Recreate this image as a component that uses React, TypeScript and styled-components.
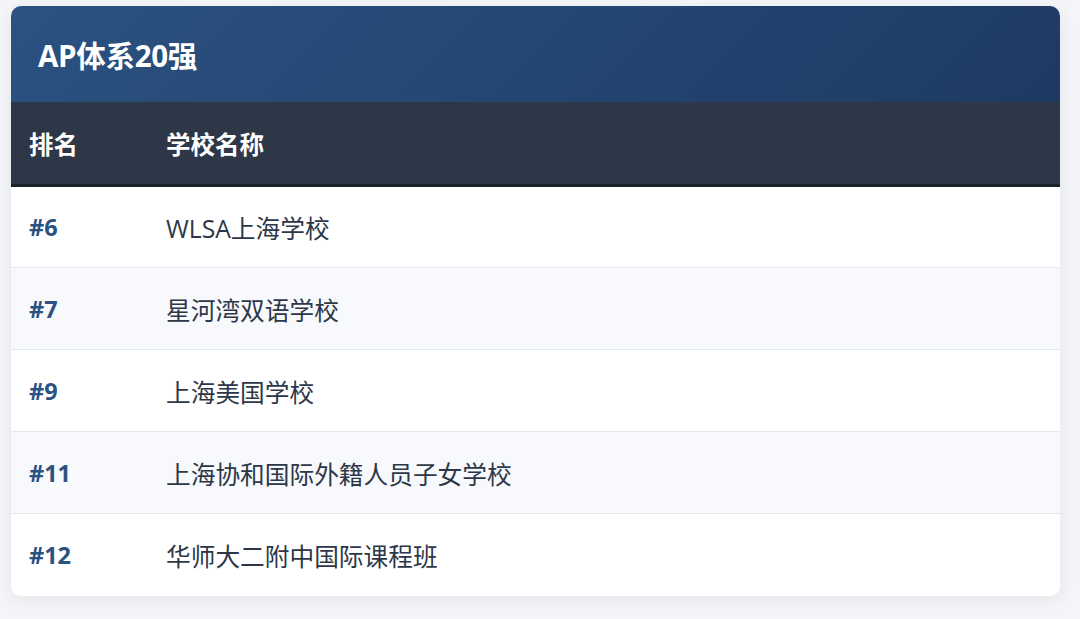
import React from "react";
import styled, { createGlobalStyle } from "styled-components";

const GlobalStyle = createGlobalStyle`
  html, body {
    margin: 0;
    padding: 0;
    background: #f4f5f8;
    font-family: "Open Sans", "Noto Sans CJK SC", sans-serif;
  }
`;

const schools = [
  { rank: 6, name: "WLSA上海学校" },
  { rank: 7, name: "星河湾双语学校" },
  { rank: 9, name: "上海美国学校" },
  { rank: 11, name: "上海协和国际外籍人员子女学校" },
  { rank: 12, name: "华师大二附中国际课程班" },
];

const App = () => {
  return (
    <>
      <GlobalStyle />
      <Page>
        <Card>
          <Header>
            <Title>AP体系20强</Title>
          </Header>
          <Table>
            <thead>
              <tr>
                <HeadCell>排名</HeadCell>
                <HeadCell>学校名称</HeadCell>
              </tr>
            </thead>
            <tbody>
              {schools.map((s, i) => (
                <Row key={s.rank} $alt={i % 2 === 1}>
                  <RankCell>#{s.rank}</RankCell>
                  <NameCell>{s.name}</NameCell>
                </Row>
              ))}
            </tbody>
          </Table>
        </Card>
      </Page>
    </>
  );
};

export default App;

const Page = styled.div`
  padding: 6px 20px 23px 11px;
`;

const Card = styled.div`
  width: 1049px;
  background: #ffffff;
  border-radius: 10px;
  overflow: hidden;
  box-shadow: 0 4px 16px rgba(30, 45, 80, 0.08);
`;

const Header = styled.div`
  height: 96px;
  display: flex;
  align-items: center;
  padding: 0 27px;
  background: linear-gradient(135deg, #2b5281 0%, #1d3a63 100%);
`;

const Title = styled.h1`
  margin: 0;
  font-size: 29.5px;
  font-weight: 700;
  color: #ffffff;
  letter-spacing: -0.3px;
`;

const Table = styled.table`
  width: 100%;
  border-collapse: collapse;
`;

const HeadCell = styled.th`
  height: 82px;
  padding: 0 18px;
  text-align: left;
  font-size: 24.5px;
  font-weight: 700;
  color: #ffffff;
  background: #2d3748;
  border-bottom: 3px solid #1a202c;
  &:first-child {
    width: 101px;
  }
`;

const Row = styled.tr<{ $alt: boolean }>`
  height: 82px;
  background: ${(p) => (p.$alt ? "#f7f9fc" : "#ffffff")};
  border-bottom: 1px solid #e2e8f0;
  &:last-child {
    border-bottom: none;
  }
`;

const RankCell = styled.td`
  padding: 0 18px;
  font-size: 23.5px;
  font-weight: 700;
  color: #2c5282;
`;

const NameCell = styled.td`
  padding: 0 18px;
  font-size: 24.7px;
  color: #2d3748;
`;
